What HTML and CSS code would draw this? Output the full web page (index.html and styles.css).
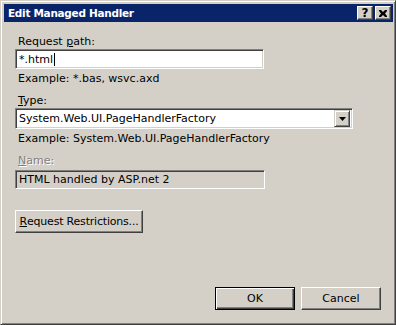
FILE: index.html
```html
<!DOCTYPE html>
<html>
<head>
  <title>Edit Managed Handler</title>
  <link rel="stylesheet" href="styles.css">
</head>
<body>

  <div class="window">
    <div class="titlebar">
      <span class="title">Edit Managed Handler</span>
      <div class="caption-btn help">?</div>
      <div class="caption-btn close">
        <svg width="8" height="7" viewBox="0 0 8 7"><path d="M0 0h2l2 2 2-2h2v1l-2 2.5 2 2.5v1h-2l-2-2-2 2h-2v-1l2-2.5-2-2.5z" fill="#000"/></svg>
      </div>
    </div>

    <div class="content">
      <div class="label">Request <u>p</u>ath:</div>
      <div class="field path">*.html<span class="caret"></span></div>
      <div class="hint">Example: *.bas, wsvc.axd</div>

      <div class="label gap"><u>T</u>ype:</div>
      <div class="combo">
        <span class="combo-text">System.Web.UI.PageHandlerFactory</span>
        <div class="combo-btn">
          <svg width="7" height="4" viewBox="0 0 7 4"><path d="M0 0h7l-3.5 4z" fill="#000"/></svg>
        </div>
      </div>
      <div class="hint">Example: System.Web.UI.PageHandlerFactory</div>

      <div class="label gap disabled"><u>N</u>ame:</div>
      <div class="field name">HTML handled by ASP.net 2</div>

      <div class="btn restrictions"><u>R</u>equest Restrictions...</div>

      <div class="footer">
        <div class="btn default">OK</div>
        <div class="btn">Cancel</div>
      </div>
    </div>
  </div>

</body>
</html>
```

FILE: styles.css
```css
body {
  margin: 0;
  font-family: "DejaVu Sans", Verdana, sans-serif;
  font-size: 11px;
  color: #000;
  background-color: #d4d0c8;
}

.window {
  width: 396px;
  height: 325px;
  box-sizing: border-box;
  background-color: #d4d0c8;
  border: 1px solid;
  border-color: #d4d0c8 #404040 #404040 #d4d0c8;
  box-shadow: inset 1px 1px #fff, inset -1px -1px #808080;
  padding: 3px 2px 2px 3px;
  display: flex;
  flex-direction: column;
}

.titlebar {
  height: 18px;
  background-color: #0a246a;
  display: flex;
  align-items: center;
  padding: 0 2px 0 2px;
}

.title {
  flex: 1;
  color: #fff;
  font-weight: bold;
  font-size: 10.5px;
  letter-spacing: -0.3px;
  padding-left: 2px;
}

.caption-btn {
  width: 16px;
  height: 14px;
  box-sizing: border-box;
  border: 1px solid;
  border-color: #fff #404040 #404040 #fff;
  box-shadow: inset -1px -1px #808080;
  background-color: #d4d0c8;
  display: flex;
  align-items: center;
  justify-content: center;
}

.help {
  font-weight: bold;
  font-size: 12px;
  line-height: 12px;
  margin-right: 2px;
}

.content {
  flex: 1;
  display: flex;
  flex-direction: column;
  align-items: flex-start;
  padding: 13px 12px 12px 11px;
}

.label {
  line-height: 13px;
  padding-left: 3px;
  margin-bottom: 1px;
}

.label.gap {
  margin-top: 9px;
}

.disabled {
  color: #808080;
  text-shadow: 1px 1px #fff;
}

.hint {
  line-height: 13px;
  padding-left: 3px;
  margin-top: 3px;
}

.field {
  height: 20px;
  box-sizing: border-box;
  border: 1px solid;
  border-color: #808080 #fff #fff #808080;
  box-shadow: inset 1px 1px #404040, inset -1px -1px #d4d0c8;
  padding: 0 3px;
  display: flex;
  align-items: center;
  background-color: #fff;
}

.path {
  width: 249px;
}

.caret {
  display: inline-block;
  width: 1px;
  height: 13px;
  background-color: #000;
  margin-left: 1px;
}

.name {
  width: 250px;
  height: 19px;
  margin-top: 2px;
  background-color: #d4d0c8;
}

.combo {
  width: 338px;
  height: 21px;
  box-sizing: border-box;
  border: 1px solid;
  border-color: #808080 #fff #fff #808080;
  box-shadow: inset 1px 1px #404040, inset -1px -1px #d4d0c8;
  background-color: #fff;
  display: flex;
  align-items: center;
  padding: 2px 2px 2px 3px;
}

.combo-text {
  flex: 1;
}

.combo-btn {
  width: 16px;
  height: 17px;
  box-sizing: border-box;
  border: 1px solid;
  border-color: #d4d0c8 #404040 #404040 #d4d0c8;
  box-shadow: inset 1px 1px #fff, inset -1px -1px #808080;
  background-color: #d4d0c8;
  display: flex;
  align-items: center;
  justify-content: center;
}

.btn {
  height: 23px;
  width: 80px;
  box-sizing: border-box;
  border: 1px solid;
  border-color: #fff #404040 #404040 #fff;
  box-shadow: inset -1px -1px #808080;
  background-color: #d4d0c8;
  display: flex;
  align-items: center;
  justify-content: center;
}

.restrictions {
  width: 128px;
  margin-top: 21px;
  letter-spacing: -0.2px;
}

.btn.default {
  border-color: #000;
  box-shadow: inset 1px 1px #fff, inset -1px -1px #404040, inset -2px -2px #808080;
}

.footer {
  margin-top: auto;
  align-self: flex-end;
  display: flex;
  gap: 6px;
}
```
